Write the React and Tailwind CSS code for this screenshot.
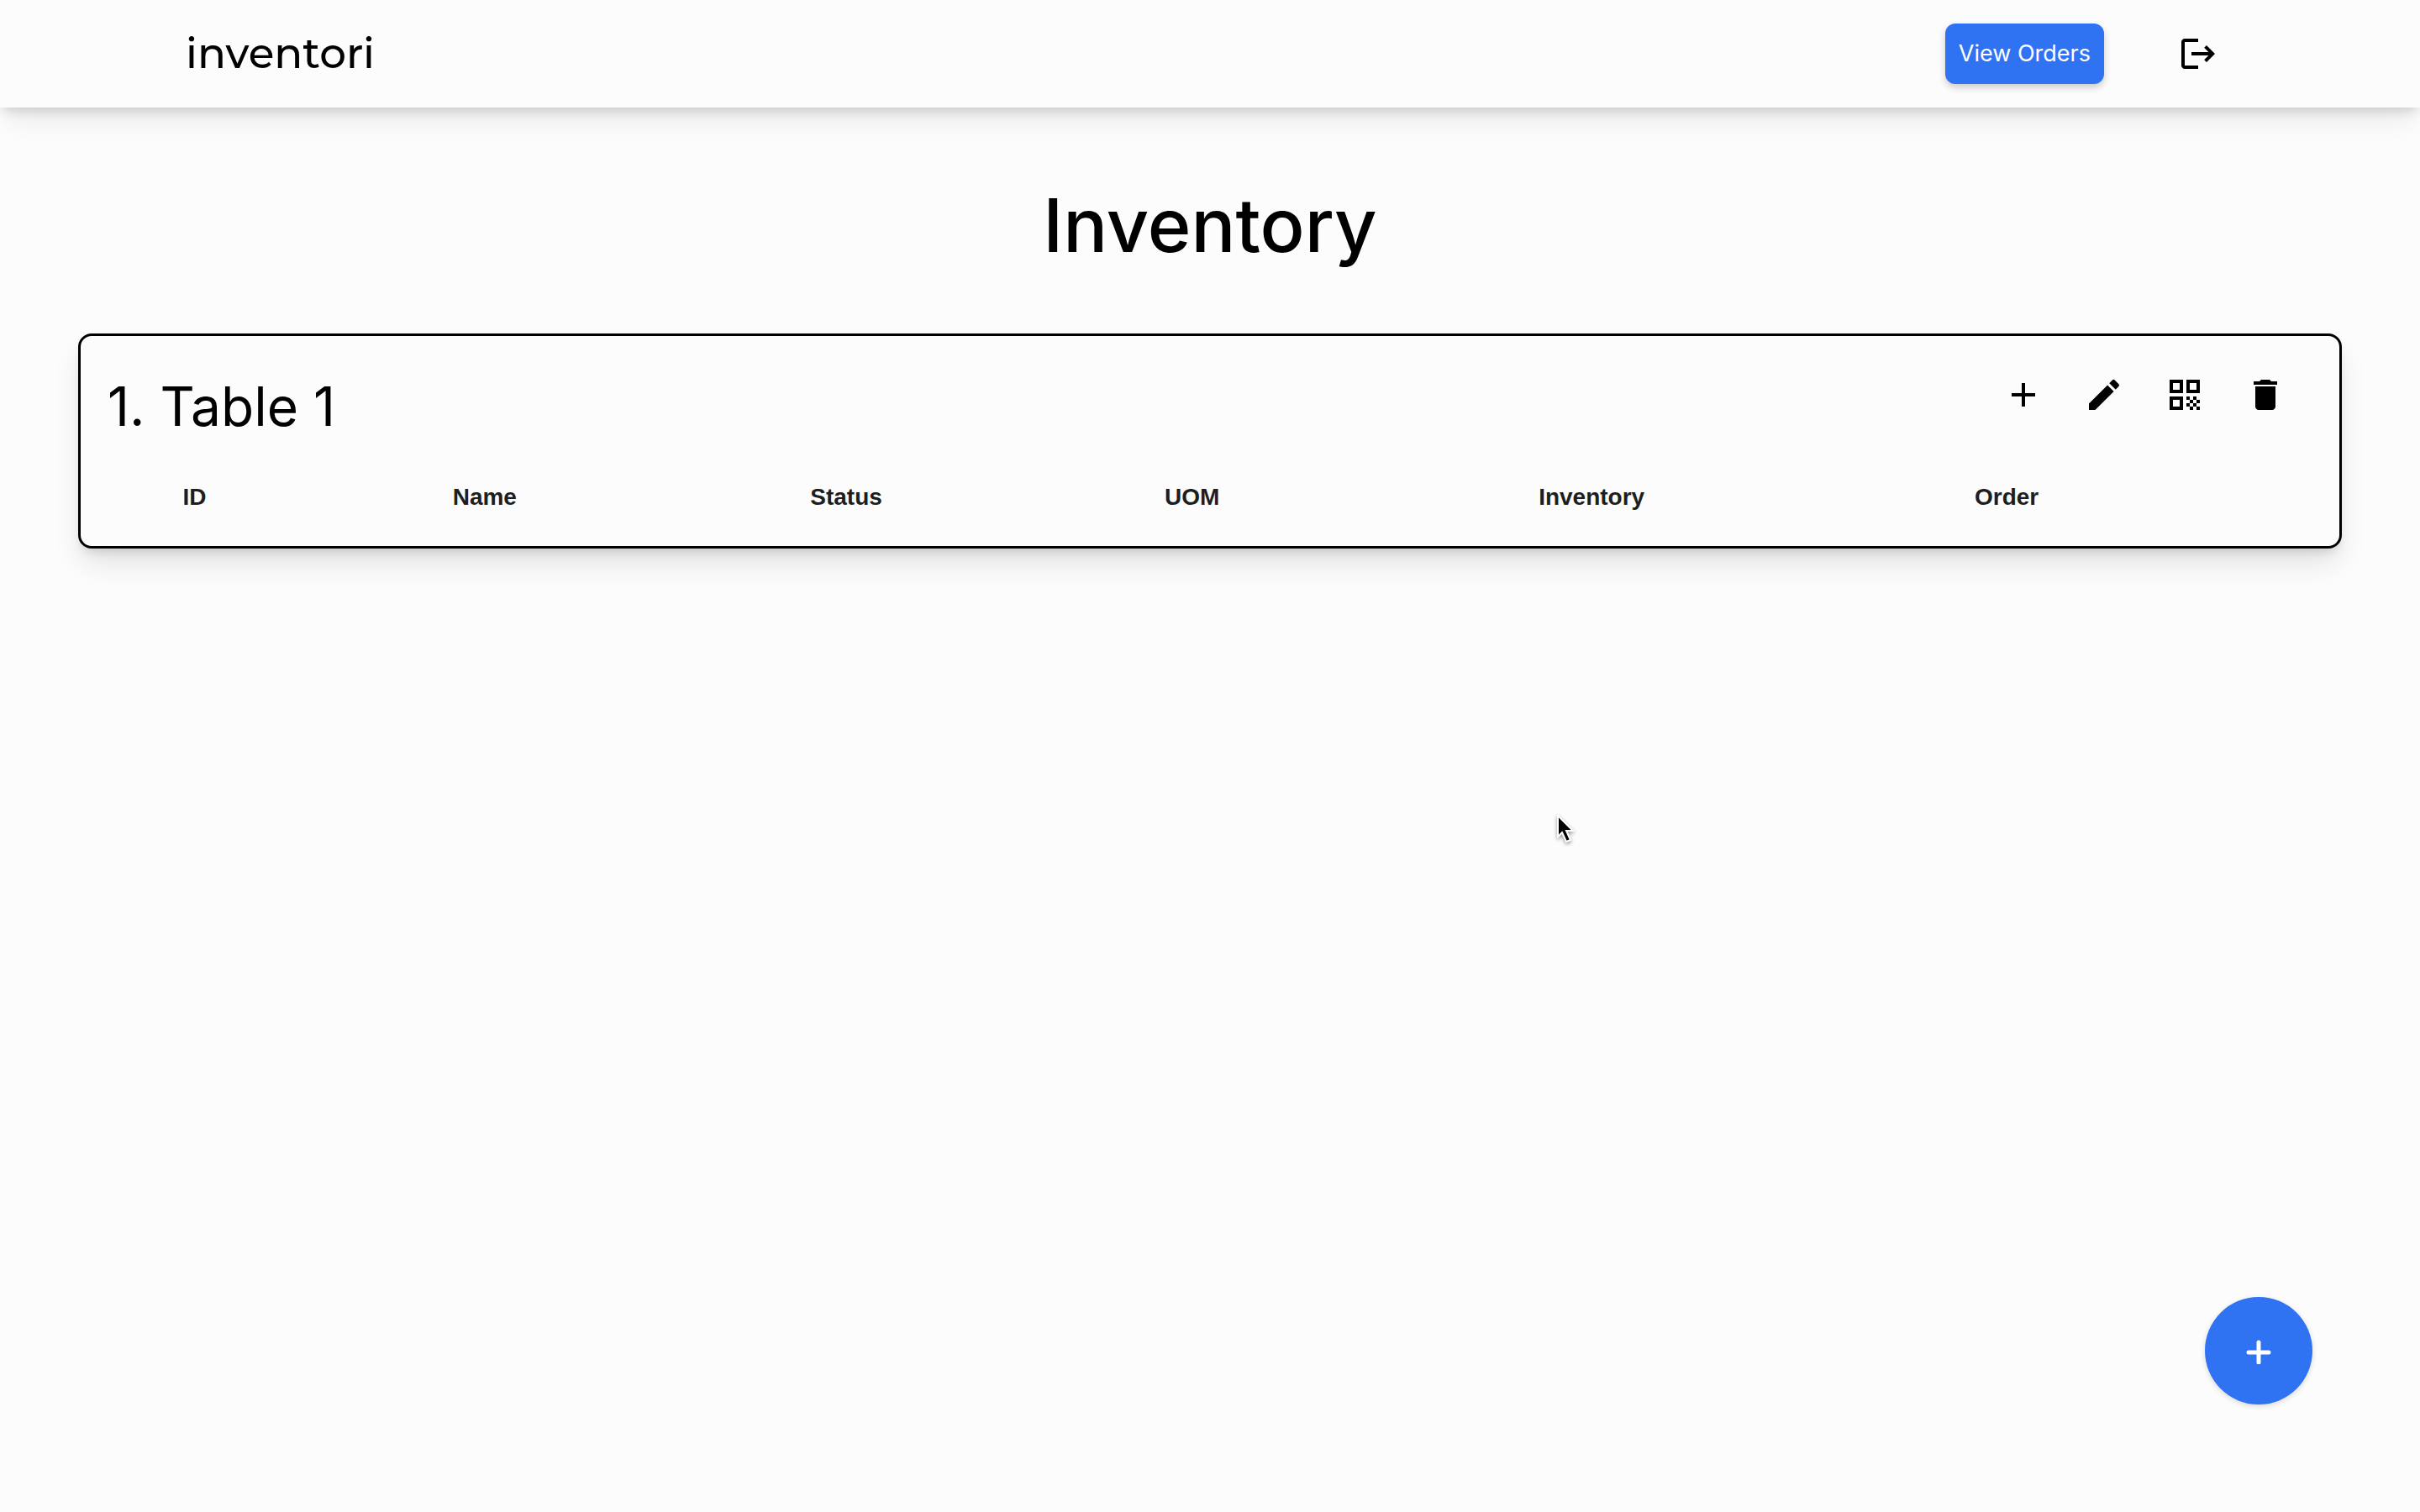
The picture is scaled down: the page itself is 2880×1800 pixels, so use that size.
import { MdAdd, MdDelete, MdEdit, MdLogout, MdQrCode } from "react-icons/md";

const columns = [
  { label: "ID", width: "w-[9%]" },
  { label: "Name", width: "w-[17%]" },
  { label: "Status", width: "w-[15.4%]" },
  { label: "UOM", width: "w-[15.6%]" },
  { label: "Inventory", width: "w-[20.2%]" },
  { label: "Order", width: "w-[17%]" },
];

const actions = [
  { label: "Add item", Icon: MdAdd },
  { label: "Edit table", Icon: MdEdit },
  { label: "Show QR code", Icon: MdQrCode },
  { label: "Delete table", Icon: MdDelete },
];

function Header() {
  return (
    <header className="flex h-32 items-center justify-between bg-[#fcfcfd] pr-60 pl-[221px] shadow-[0_20px_30px_-6px_rgba(0,0,0,0.08),0_8px_12px_-4px_rgba(0,0,0,0.14)]">
      <a href="#" className="font-[Montserrat,Inter,sans-serif] text-[50px] leading-none font-medium">
        inventori
      </a>
      <div className="flex items-center gap-22">
        <button className="h-18 rounded-xl bg-[#2f73f3] px-4 text-[27px] text-white shadow-[0_4px_8px_rgba(0,0,0,0.2)]">
          View Orders
        </button>
        <button aria-label="Log out">
          <MdLogout className="size-12" />
        </button>
      </div>
    </header>
  );
}

function TableCard() {
  return (
    <section className="mx-[93px] rounded-2xl border-3 border-black px-4 pt-[46px] pb-[30px] shadow-[0_20px_36px_-6px_rgba(0,0,0,0.12),0_8px_12px_-4px_rgba(0,0,0,0.12)]">
      <div className="flex items-start justify-between pr-12 pl-4">
        <h2 className="text-[64px] leading-[76px]">1. Table 1</h2>
        <div className="flex gap-12">
          {actions.map(({ label, Icon }) => (
            <button key={label} aria-label={label}>
              <Icon className="size-12" />
            </button>
          ))}
        </div>
      </div>
      <table className="mt-[42px] w-full table-fixed font-['Liberation_Sans',sans-serif] text-[28px] leading-14 text-[#1c1e20]">
        <thead>
          <tr>
            {columns.map(({ label, width }) => (
              <th key={label} scope="col" className={width}>
                {label}
              </th>
            ))}
            <td />
          </tr>
        </thead>
      </table>
    </section>
  );
}

export default function App() {
  return (
    <div className="min-h-screen bg-[#fcfcfd] font-[Inter,sans-serif] text-black">
      <Header />
      <main>
        <h1 className="pt-20 pb-[69px] text-center text-[88px] leading-30 font-medium">
          Inventory
        </h1>
        <TableCard />
      </main>
      <button
        aria-label="Add table"
        className="fixed right-32 bottom-32 flex size-32 items-center justify-center rounded-full bg-[#2f73f3] text-white shadow-[0_2px_6px_rgba(0,0,0,0.15)]"
      >
        <svg viewBox="0 0 32 32" className="size-8" fill="none" stroke="currentColor" strokeWidth="5" strokeLinecap="round">
          <path d="M16 6v24M4 18h24" />
        </svg>
      </button>
      <svg viewBox="0 0 32 40" className="pointer-events-none absolute top-[968px] left-[1850px] h-10 w-8 drop-shadow-[0_2px_2px_rgba(0,0,0,0.4)]" aria-hidden="true">
        <path d="M4 3v25l5-5 5 11 5-2-5-11h8z" fill="black" stroke="white" strokeWidth="2" />
      </svg>
    </div>
  );
}
